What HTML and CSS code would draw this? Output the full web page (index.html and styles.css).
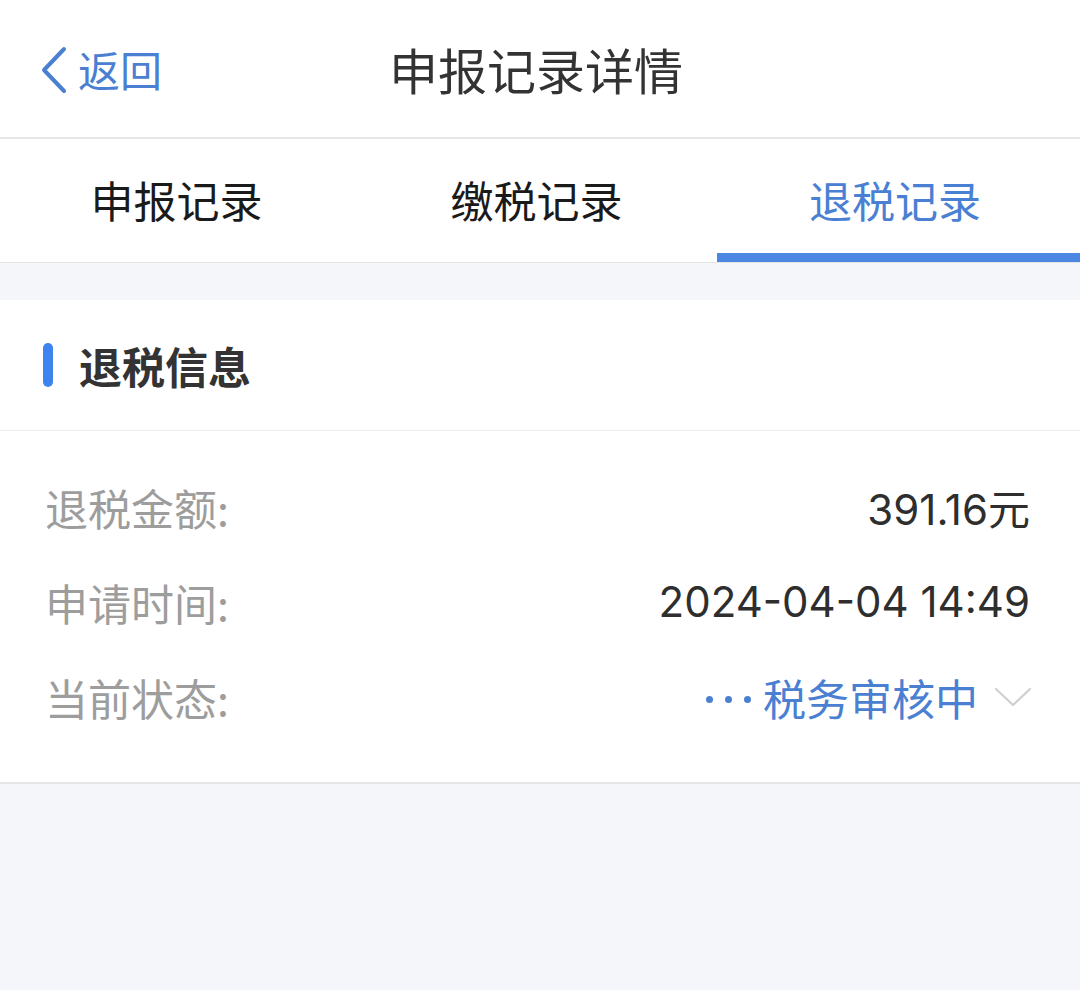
FILE: index.html
```html
<!DOCTYPE html>
<html lang="zh-CN">
<head>
    <meta charset="UTF-8">
    <meta name="viewport" content="width=device-width, initial-scale=1.0">
    <title>申报记录详情</title>
    <link rel="stylesheet" href="styles.css">
</head>
<body>
    <div class="page">
        <header class="nav">
            <a class="back" href="#">
                <svg class="back-icon" width="28" height="48" viewBox="0 0 28 48">
                    <polyline points="24,3 4,24 24,45" fill="none" stroke="#4a7fd2" stroke-width="4" stroke-linecap="round" stroke-linejoin="round"/>
                </svg>
                <span>返回</span>
            </a>
            <div class="nav-title">申报记录详情</div>
            <div></div>
        </header>

        <nav class="tabs">
            <div class="tab">申报记录</div>
            <div class="tab">缴税记录</div>
            <div class="tab active">退税记录</div>
        </nav>

        <section class="card">
            <div class="card-head">
                <span class="bar"></span>
                <h2>退税信息</h2>
            </div>
            <div class="rows">
                <div class="row">
                    <span class="label">退税金额:</span>
                    <span class="value">391.16元</span>
                </div>
                <div class="row">
                    <span class="label">申请时间:</span>
                    <span class="value">2024-04-04 14:49</span>
                </div>
                <div class="row">
                    <span class="label">当前状态:</span>
                    <span class="status">
                        <span class="dots"><i></i><i></i><i></i></span>
                        <span class="status-text">税务审核中</span>
                        <svg class="arrow" width="38" height="22" viewBox="0 0 38 22">
                            <polyline points="2,3 19,19 36,3" fill="none" stroke="#cfcfcf" stroke-width="2.2" stroke-linecap="round" stroke-linejoin="round"/>
                        </svg>
                    </span>
                </div>
            </div>
        </section>
    </div>
</body>
</html>
```

FILE: styles.css
```css
body {
    margin: 0;
    font-family: "Noto Sans CJK SC", "Noto Sans", sans-serif;
    background-color: #f5f6f9;
}

.page {
    width: 1080px;
    min-height: 990px;
    background-color: #f5f6f9;
}

/* top bar */
.nav {
    height: 137px;
    background-color: #fff;
    border-bottom: 2px solid #e6e6e6;
    display: grid;
    grid-template-columns: 1fr auto 1fr;
    align-items: center;
}

.back {
    display: flex;
    align-items: center;
    gap: 10px;
    padding-left: 40px;
    color: #4a7fd2;
    font-size: 42px;
    text-decoration: none;
    line-height: 1;
}

.back-icon {
    margin-top: 2px;
}

.nav-title {
    font-size: 49px;
    color: #333;
    line-height: 1;
    margin-right: 8px;
}

/* tabs */
.tabs {
    display: grid;
    grid-template-columns: repeat(3, 1fr);
    height: 123px;
    background-color: #fff;
    border-bottom: 1px solid #e4e4e4;
}

.tab {
    display: flex;
    justify-content: center;
    align-items: center;
    padding-top: 6px;
    padding-right: 7px;
    font-size: 43px;
    color: #1a1a1a;
    box-sizing: border-box;
    border-bottom: 9px solid transparent;
}

.tab.active {
    color: #4a80d4;
    border-bottom-color: #4a86e2;
    margin-left: -3px;
}

/* info card */
.card {
    margin-top: 37px;
    background-color: #fff;
    border-bottom: 2px solid #e6e6e6;
}

.card-head {
    height: 130px;
    display: flex;
    align-items: center;
    padding-left: 43px;
    border-bottom: 1px solid #ececec;
}

.bar {
    width: 10px;
    height: 44px;
    border-radius: 5px;
    background-color: #3e84ef;
    margin-right: 26px;
}

.card-head h2 {
    margin: 0;
    font-size: 43px;
    font-weight: bold;
    color: #333;
    line-height: 1;
}

.rows {
    padding: 28px 50px 38px 45px;
}

.row {
    height: 95px;
    display: flex;
    justify-content: space-between;
    align-items: center;
}

.label {
    font-size: 43px;
    color: #9d9d9d;
}

.value {
    font-family: "Inter", "Noto Sans CJK SC", sans-serif;
    font-size: 42px;
    color: #2e2e2e;
}

.status {
    display: flex;
    align-items: center;
    color: #4a7fd2;
    font-size: 43px;
    margin-right: -2px;
}

.dots {
    display: flex;
    gap: 12px;
    margin-right: 12px;
    margin-top: 6px;
}

.dots i {
    width: 7px;
    height: 7px;
    border-radius: 50%;
    background-color: #4a7fd2;
}

.arrow {
    margin-left: 16px;
}
```
